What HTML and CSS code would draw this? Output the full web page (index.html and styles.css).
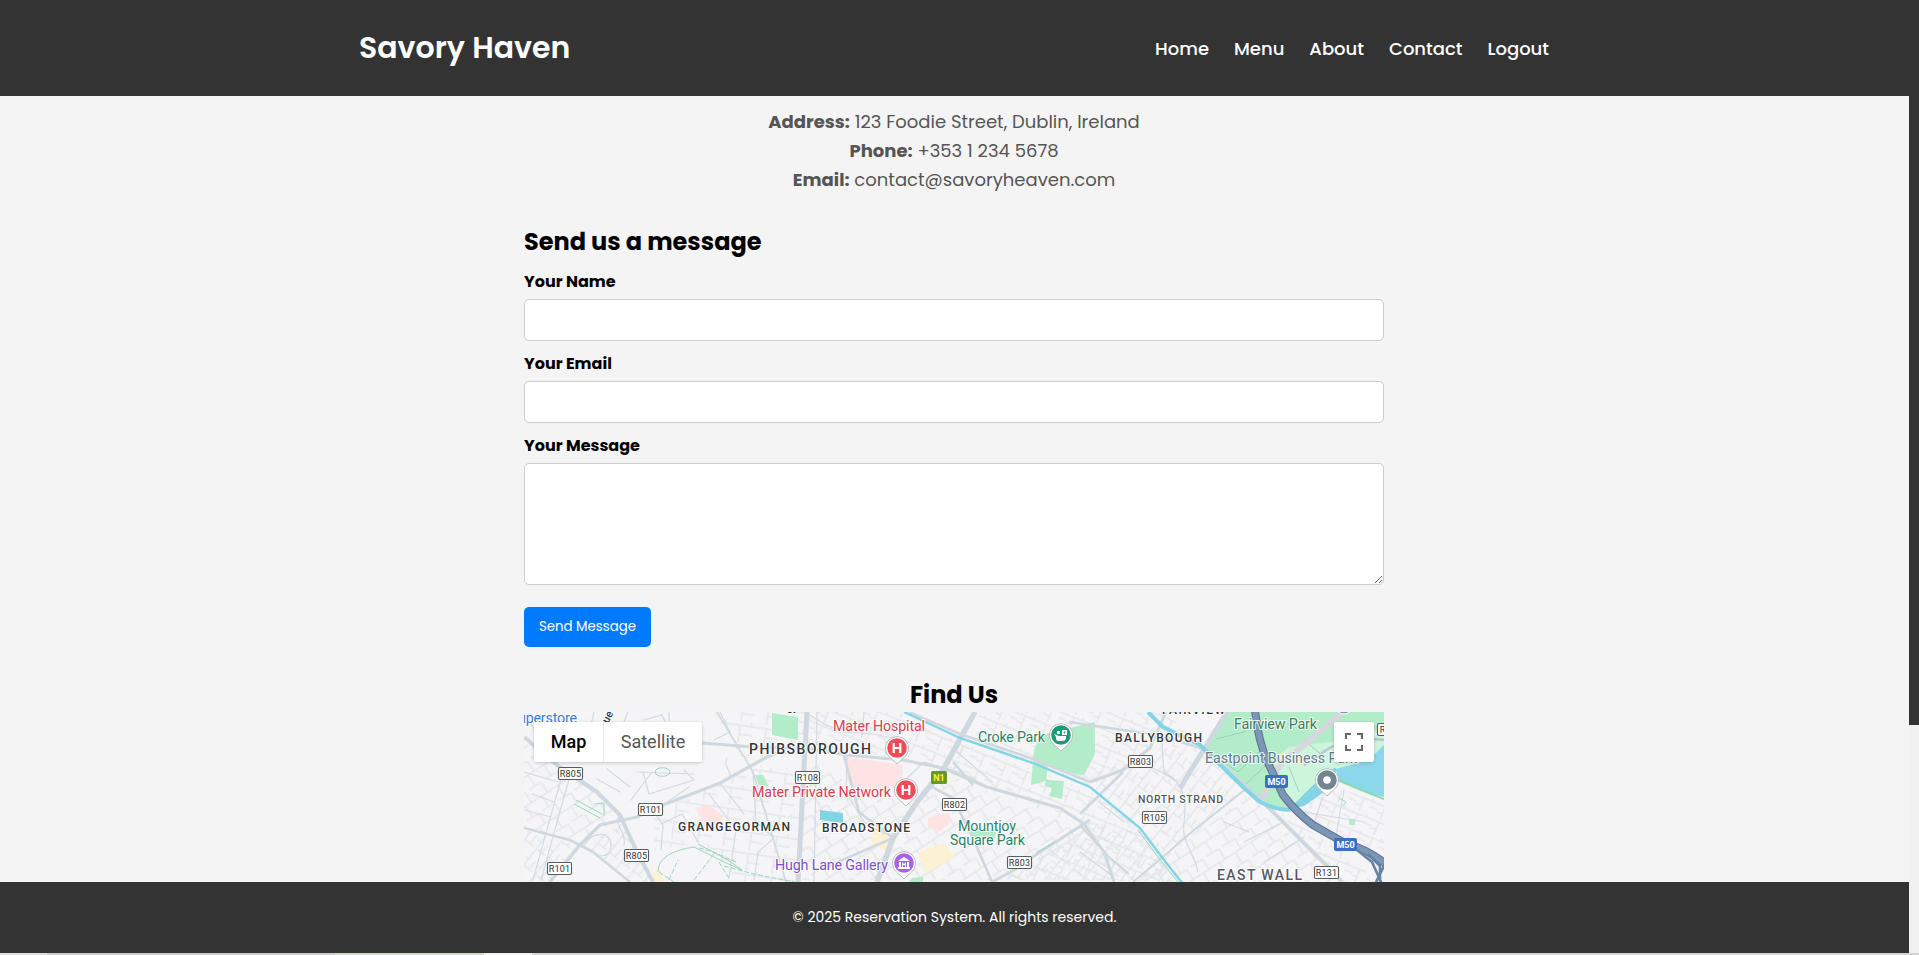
FILE: index.html
```html
<!DOCTYPE html>
<html lang="en">
<head>
<meta charset="utf-8">
<title>Contact - Savory Haven</title>
<link rel="stylesheet" href="styles.css">
</head>
<body>
<div class="window">
<div class="page">
<header class="header">
  <div class="header-inner">
    <div class="logo">Savory Haven</div>
    <nav class="nav">
      <a>Home</a><a>Menu</a><a>About</a><a>Contact</a><a>Logout</a>
    </nav>
  </div>
</header>
<main class="main">
  <div class="info">
    <p><strong>Address:</strong> 123 Foodie Street, Dublin, Ireland</p>
    <p><strong>Phone:</strong> +353 1 234 5678</p>
    <p><strong>Email:</strong> contact@savoryheaven.com</p>
  </div>
  <form class="form">
    <h2 class="form-title">Send us a message</h2>
    <label for="name">Your Name</label>
    <input id="name" type="text">
    <label for="email">Your Email</label>
    <input id="email" type="email">
    <label for="message">Your Message</label>
    <textarea id="message"></textarea>
    <button class="send" type="button">Send Message</button>
  </form>
  <h2 class="find">Find Us</h2>
  <div class="map">
    <svg class="map-canvas" width="860" height="170" viewBox="0 0 860 170">
      <defs>
        <pattern id="sa" width="23" height="17" patternUnits="userSpaceOnUse" patternTransform="rotate(22)"><path class="lane" d="M0 3H23M6 3V17M0 11H6M15 0V3M15 9H23"/></pattern>
        <pattern id="sb" width="19" height="25" patternUnits="userSpaceOnUse" patternTransform="rotate(-33)"><path class="lane" d="M0 5H19M7 5V18M0 18H13M14 18V25M14 0V5"/></pattern>
        <pattern id="sc" width="21" height="15" patternUnits="userSpaceOnUse" patternTransform="rotate(-52)"><path class="lane" d="M0 4H21M5 4V15M13 0V4M5 11H15"/></pattern>
        <pattern id="sd" width="26" height="21" patternUnits="userSpaceOnUse" patternTransform="rotate(8)"><path class="lane" d="M0 4H26M8 4V21M8 13H21M19 0V4"/></pattern>
        <g id="pin"><path d="M0 16L-7 9.5A11.6 11.6 0 1 1 7 9.5Z" fill="#fff" stroke="#a9aeb3" stroke-width=".8"/></g>
        <g id="shield"><rect x=".5" y=".5" width="24" height="12" rx="1.5" fill="#fff" stroke="#565b60" stroke-width="1.1"/></g>
      </defs>
      <rect width="860" height="170" fill="#f5f4f6"/>
      <path fill="url(#sb)" d="M0 30L70 80L96 105L56 133L0 116Z"/>
      <path fill="url(#sc)" d="M0 118L56 133L30 170H0ZM60 135L100 110L128 170H106Z"/>
      <path fill="url(#sd)" d="M190 0H281L278 42L220 50ZM130 100L245 50L276 60L274 170H215L180 130L130 138Z"/>
      <path fill="url(#sa)" d="M281 0H375L446 34L419 56L323 43L281 40ZM455 0H640L680 35L626 36L566 75L510 50L450 30Z"/>
      <path fill="url(#sb)" d="M281 45L323 70L353 80L400 78L353 168H274ZM420 60L566 122L476 168H353L393 92Z"/>
      <path fill="url(#sa)" d="M420 60L440 32L566 78L615 116L656 168H476L566 118Z"/>
      <path fill="url(#sc)" d="M560 68L626 36L680 37L723 76L640 150ZM480 167L566 110L615 120L655 170Z"/>
      <path fill="url(#sb)" d="M725 82L810 162V170H610L640 147Z"/>
      <path fill="url(#sa)" d="M775 97L803 76L860 86V148L790 114ZM755 100L830 145L850 170H812Z"/>

      <g fill="#b2ecc9">
        <path d="M248 1L274 5V28L248 23Z"/><path d="M231 63H239L245 75L235 73Z"/>
        <path d="M516 23L571 10V42L560 63L551 62L524 53L522 69L507 73L510 38Z"/>
        <path d="M522 68L540 69L538 87L525 84L528 76L521 74Z"/>
        <path d="M444 119L472 117L471 127L448 127Z"/><path d="M388 166L399 165V170H385Z"/>
        <path d="M703 0H860V50L812 57L768 98L736 90L719 75L682 37Z"/>
        <path d="M825 107H831V113H825Z"/>
      </g>
      <path fill="#cdf5dc" d="M765 35L822 28L860 16V50L812 57L768 98L753 80L741 55Z"/>
      <g fill="#fde3e1"><path d="M323 45L379 53L378 73L353 82L323 70Z"/><path d="M404 106L424 100L426 111L413 121L404 114Z"/><path d="M171 96L184 93L200 104L193 114L178 109Z"/></g>
      <g fill="#fbf1d3"><path d="M394 140L420 131L431 145L401 162Z"/><path d="M350 115L374 128L362 139L348 132Z"/><path d="M127 162L136 157L140 170H130Z"/></g>
      <path fill="#7fd4e6" d="M296 98L319 101V111L296 108Z"/>
      <path fill="#8bd8ec" d="M812 57L845 48L860 33V85L835 78L814 69Z"/>
      <path d="M814 68L835 77L860 87" fill="none" stroke="#8cd8ad" stroke-width="2"/>
      <path d="M692 27L720 20L731 5M697 48L714 60L735 40M719 75L742 53M765 55L775 80M780 28L800 45M700 45L728 45" fill="none" stroke="#8fcaae" stroke-width=".8"/>

      <g fill="none" stroke="#d3dae1" stroke-width="1.2" stroke-linecap="round">
        <path d="M5 8C15 30 40 40 55 28M70 0L66 18M104 0L100 10M120 8L138 3L142 12M145 0V9"/>
        <path d="M39 60L9 168M47 60L17 168M0 60L34 70M8 82L30 90M0 98L27 105"/>
        <path d="M113 60L170 62M119 60L125 82L170 68L160 58M73 67L96 80M83 57L106 75M107 88L128 60"/>
        <path d="M130 100L139 113L137 138M137 112L158 102L174 130M139 93L165 75M185 82L212 118L205 165M196 71L220 102M229 60L232 110M232 110L250 126L234 140L230 168"/>
        <path d="M60 135C65 122 80 118 86 128C90 142 80 148 69 140M95 103C90 115 103 120 100 133M196 0L206 20L190 28M203 46C198 55 210 60 205 68"/>
        <path d="M281 0L300 12L320 20L350 22L385 30M293 0L290 170M283 30L320 38M323 43L322 80L340 110L360 122M340 0L338 25"/>
        <path d="M419 56C440 60 452 68 463 75M433 40L468 70M419 56L400 50L381 68"/>
        <path d="M556 140L590 165M575 90L600 110M637 20L640 60C660 70 663 90 660 110C657 130 670 140 674 160M606 48C640 58 655 70 656 76"/>
        <path d="M700 110L725 120M720 130L760 110M740 150L780 125M780 100L840 110M800 80L790 112M820 78L812 124"/>
      </g>
      <g fill="none" stroke="#d6d9dc" stroke-width="4">
        <path d="M819 0L756 53L736 90" stroke="#d8d6de" stroke-width="6"/>
        <path d="M860 28C830 24 805 33 795 44L780 53" stroke="#b9c5cf" stroke-width="2.5"/>
      </g>
      <g fill="none" stroke="#d0d8df" stroke-width="2.6" stroke-linejoin="round">
        <path d="M0 25L33 53L73 80L96 103L113 140L129 170" stroke-width="4"/>
        <path d="M26 170L56 133L76 113L113 105L139 93L196 71L243 45L262 38" stroke-width="3.2"/>
        <path d="M0 116L46 128L69 140L106 170"/>
        <path d="M178 31L229 35L281 36L323 43L379 48L419 56L463 75L536 96L560 112L580 140L590 170" stroke-width="3"/>
        <path d="M193 0L229 60L249 126L262 170" stroke-width="1.6"/>
        <path d="M283 0L278 93L274 170" stroke-width="5"/>
        <path d="M451 0L419 58L393 90L369 126L353 170" stroke-width="5.5"/>
        <path d="M385 0L436 22L509 47L566 70"/>
        <path d="M429 50L449 73M408 75L429 86L449 126L468 170"/>
        <path d="M566 108L516 140L490 158L468 170M566 70L599 58L626 36L642 0" stroke-width="3"/>
        <path d="M556 102L599 60M320 44L335 100L369 126L300 156"/>
        <path d="M703 0L666 60L656 76" stroke-width="5"/>
        <path d="M679 36L739 90L809 160L818 170" stroke-width="4"/>
        <path d="M545 10L639 24L682 38"/>
        <path d="M723 76L670 118L633 150L609 170M556 113L585 145L605 162" stroke-width="2"/>
      </g>
      <g fill="none" stroke="#83d4e4" stroke-width="2.4">
        <path d="M380 0L436 26L509 51L566 75L616 116L640 148L659 172"/>
        <path d="M624 0L639 15L676 33L719 75L736 90Q757 100 768 97L789 76L812 57" stroke-width="4"/>
      </g>
      <path d="M768 97L789 76L812 57L800 80L780 94Z" fill="#83d4e4"/>
      <g fill="none" stroke="#9bd7b6" stroke-width="1">
        <path d="M134 160C134 145 150 138 170 135L200 150L218 158L204 148L174 132"/><path d="M135 160L150 170M175 136L190 140L214 151M195 150L206 168M200 154L230 162L270 170M145 168L154 148M170 168L190 142" stroke-dasharray="5 2"/>
        <path d="M52 88L78 102M50 92L76 106M70 92L80 91V104M131 60A7 4 0 1 0 146 60A7 4 0 1 0 131 60"/>
        <path d="M614 118L640 153L654 170M512 141L530 130M815 86L822 90L819 94"/>
      </g>
      <g fill="none" stroke-linejoin="round">
        <path d="M731 -2C733 20 738 38 745 53L759 83Q772 100 789 113L819 130Q846 138 864 154" stroke="#5d7795" stroke-width="8"/>
        <path d="M731 -2C733 20 738 38 745 53L759 83Q772 100 789 113L819 130Q846 138 864 154" stroke="#7c96b5" stroke-width="5.8"/>
        <path d="M833 138L848 150L858 172M844 142L856 154V170M862 150L852 170" stroke="#6582a3" stroke-width="2.6"/>
      </g>

      <g class="road-label">
        <g transform="translate(34 55)"><use href="#shield"/><text x="12.5" y="10.2">R805</text></g>
        <g transform="translate(114 91)"><use href="#shield"/><text x="12.5" y="10.2">R101</text></g>
        <g transform="translate(100 137)"><use href="#shield"/><text x="12.5" y="10.2">R805</text></g>
        <g transform="translate(23 150)"><use href="#shield"/><text x="12.5" y="10.2">R101</text></g>
        <g transform="translate(271 59)"><use href="#shield"/><text x="12.5" y="10.2">R108</text></g>
        <g transform="translate(418 86)"><use href="#shield"/><text x="12.5" y="10.2">R802</text></g>
        <g transform="translate(483 144)"><use href="#shield"/><text x="12.5" y="10.2">R803</text></g>
        <g transform="translate(604 43)"><use href="#shield"/><text x="12.5" y="10.2">R803</text></g>
        <g transform="translate(618 99)"><use href="#shield"/><text x="12.5" y="10.2">R105</text></g>
        <g transform="translate(790 154)"><use href="#shield"/><text x="12.5" y="10.2">R131</text></g>
        <g transform="translate(853 11)"><use href="#shield"/><text x="5.5" y="10.2">R</text></g>
      </g>
      <g class="route">
        <rect x="407" y="59" width="16" height="13" rx="1.5" fill="#6b9729"/><text x="415" y="69" class="national">N1</text>
        <rect x="741" y="63" width="23" height="13" rx="2" fill="#3871c4"/><text x="752.5" y="72.8">M50</text>
        <rect x="810" y="126" width="23" height="13" rx="2" fill="#3871c4"/><text x="821.5" y="135.8">M50</text>
      </g>

      <g class="area">
        <text x="225" y="42" font-size="14" textLength="122">PHIBSBOROUGH</text>
        <text x="154" y="119" font-size="12" textLength="112">GRANGEGORMAN</text>
        <text x="298" y="120" font-size="12" textLength="88">BROADSTONE</text>
        <text x="591" y="30" font-size="12" textLength="87">BALLYBOUGH</text>
        <text x="614" y="91" font-size="10.5" textLength="85" class="quiet">NORTH STRAND</text>
        <text x="693" y="168" font-size="14" textLength="85" class="quiet">EAST WALL</text>
        <text x="638" y="2" font-size="12" textLength="63">FAIRVIEW</text>
        <text x="263" y="1" font-size="9">St</text>
        <text transform="translate(84 12) rotate(-62)" font-size="11">ue</text>
      </g>
      <g class="poi">
        <text x="-6" y="11" textLength="59" fill="#3b7bd6">uperstore</text>
        <text x="309" y="19" textLength="92" fill="#d63e52">Mater Hospital</text>
        <text x="228" y="85" textLength="139" fill="#d63e52">Mater Private Network</text>
        <text x="454" y="30" textLength="67" fill="#2b8465">Croke Park</text>
        <text x="434" y="119" textLength="58" fill="#2b8465">Mountjoy</text>
        <text x="426" y="133" textLength="75" fill="#2b8465">Square Park</text>
        <text x="251" y="158" textLength="113" fill="#7d50cb">Hugh Lane Gallery</text>
        <text x="710" y="17" textLength="83" fill="#398062">Fairview Park</text>
        <text x="681" y="51" textLength="152" fill="#647b88">Eastpoint Business Park</text>
      </g>
      <g transform="translate(373 36)"><use href="#pin"/><circle r="9.8" fill="#ef4c59"/><path d="M-3.3 -5V5M3.3 -5V5M-3.3 0H3.3" stroke="#fff" stroke-width="2.2"/></g>
      <g transform="translate(382 78)"><use href="#pin"/><circle r="9.8" fill="#ef4c59"/><path d="M-3.3 -5V5M3.3 -5V5M-3.3 0H3.3" stroke="#fff" stroke-width="2.2"/></g>
      <g transform="translate(537 23)"><use href="#pin"/><circle r="9.8" fill="#1b9b78"/><path d="M-7 -1L-2 1H5V4Q4 6 1 6H-3Q-5 6 -5 2ZM-4 -4H-1V-1H-4ZM1 -5H6V0H1Z" fill="#fff"/><circle cx="3.5" cy="-2.5" r="1" fill="#1b9b78"/></g>
      <g transform="translate(380 151)"><use href="#pin"/><circle r="9.8" fill="#a764ea"/><path d="M-6 -2L0 -6L6 -2ZM-5 -1H-3V4H-5ZM3 -1H5V4H3ZM-6 4H6V6H-6ZM-2 4V-1L0 1L2 -1V4H1V2H-1V4Z" fill="#fff"/></g>
      <g transform="translate(803 68)"><use href="#pin"/><circle r="9.8" fill="#71868f"/><circle r="3.8" fill="#fff"/></g>
      <circle cx="820" cy="-6" r="8" fill="#8a999f" stroke="#fff"/>
    </svg>
    <div class="map-type"><span class="type-map">Map</span><span class="type-sat">Satellite</span></div>
    <div class="fullscreen"><svg width="18" height="18" viewBox="0 0 18 18"><path d="M0 0H6V2H2V6H0ZM12 0H18V6H16V2H12ZM0 12H2V16H6V18H0ZM16 12H18V18H12V16H16Z" fill="#666"/></svg></div>
  </div>
</main>
<footer class="footer">© 2025 Reservation System. All rights reserved.</footer>
</div>
<div class="scrollbar"><div class="thumb"></div></div>
</div>
<div class="edge"></div>
</body>
</html>
```
FILE: styles.css
```css
* { box-sizing: border-box; margin: 0; padding: 0; }
body { height: 955px; overflow: hidden; background: #f4f4f4; color: #000; font-family: Poppins, Inter, sans-serif; }
.window { display: flex; height: 953px; }
.page { flex: 1; display: flex; flex-direction: column; }
.header { height: 96px; background: #333; color: #fff; }
.header-inner { width: 1190px; height: 96px; margin: 0 360px 0 359px; display: flex; align-items: center; justify-content: space-between; }
.logo { font-size: 30px; font-weight: 600; line-height: 46px; }
.nav { display: flex; gap: 25px; font-size: 18px; font-weight: 500; }
.nav a { white-space: nowrap; }
.main { width: 860px; margin: 0 525px 0 524px; padding-top: 11px; height: 786px; display: flex; flex-direction: column; }
.info { text-align: center; color: #555; font-size: 18px; line-height: 29px; }
.info strong { font-weight: 700; }
.form { display: flex; flex-direction: column; margin-top: 29px; }
h2 { font-size: 24px; font-weight: 700; line-height: 38px; }
.form-title { margin-bottom: 8px; }
label { font-size: 16px; font-weight: 700; line-height: 26px; margin-bottom: 4px; }
input, textarea { display: block; width: 100%; height: 42px; border: 1px solid #ccc; border-radius: 5px; background: #fff; margin-bottom: 10px; }
textarea { height: 122px; margin-bottom: 22px; resize: vertical; }
.send { width: 127px; height: 40px; border: 0; border-radius: 5px; background: #007bff; color: #fff; font: 400 13.33px Poppins, Inter, sans-serif; }
.find { text-align: center; margin-top: 29px; margin-bottom: -2px; }
.map { position: relative; height: 170px; overflow: hidden; font-family: Roboto, sans-serif; }
.map-canvas { display: block; }
.lane { fill: none; stroke: #dce1e6; stroke-width: 1; }
.road-label text { font-size: 9px; fill: #333; text-anchor: middle; letter-spacing: .2px; }
.route text { font-size: 9px; font-weight: 700; fill: #fff; text-anchor: middle; }
.route .national { fill: #ffee2e; }
.area text { font-weight: 500; fill: #33363a; stroke: #fff; stroke-width: 2px; paint-order: stroke; }
.area .quiet { fill: #55595e; }
.poi text { font-size: 14.3px; stroke: #fff; stroke-opacity: .8; stroke-width: 2px; paint-order: stroke; }
.map-type { position: absolute; left: 10px; top: 10px; display: flex; width: 168px; height: 40px; border-radius: 2px; background: #fff; box-shadow: 0 1px 4px -1px rgba(0,0,0,.3); font-size: 18px; line-height: 40px; text-align: center; }
.type-map { width: 70px; font-weight: 500; border-right: 1px solid #e8e8e8; }
.type-sat { flex: 1; color: #565656; }
.fullscreen { position: absolute; left: 810px; top: 10px; width: 40px; height: 40px; display: flex; align-items: center; justify-content: center; border-radius: 2px; background: #fff; box-shadow: 0 1px 4px -1px rgba(0,0,0,.3); }
.footer { height: 71px; background: #333; color: #fff; font-size: 14px; line-height: 70px; text-align: center; }
.scrollbar { width: 10px; background: #f0f0f0; }
.thumb { height: 725px; background: #333; }
.edge { height: 2px; background: linear-gradient(90deg, #ddd 47px, #ccc 47px, #ccc 335px, #d2d7c8 335px, #d2d7c8 484px, #f2f2f2 484px, #f2f2f2 532px, #d4d4d4 532px); }
```
